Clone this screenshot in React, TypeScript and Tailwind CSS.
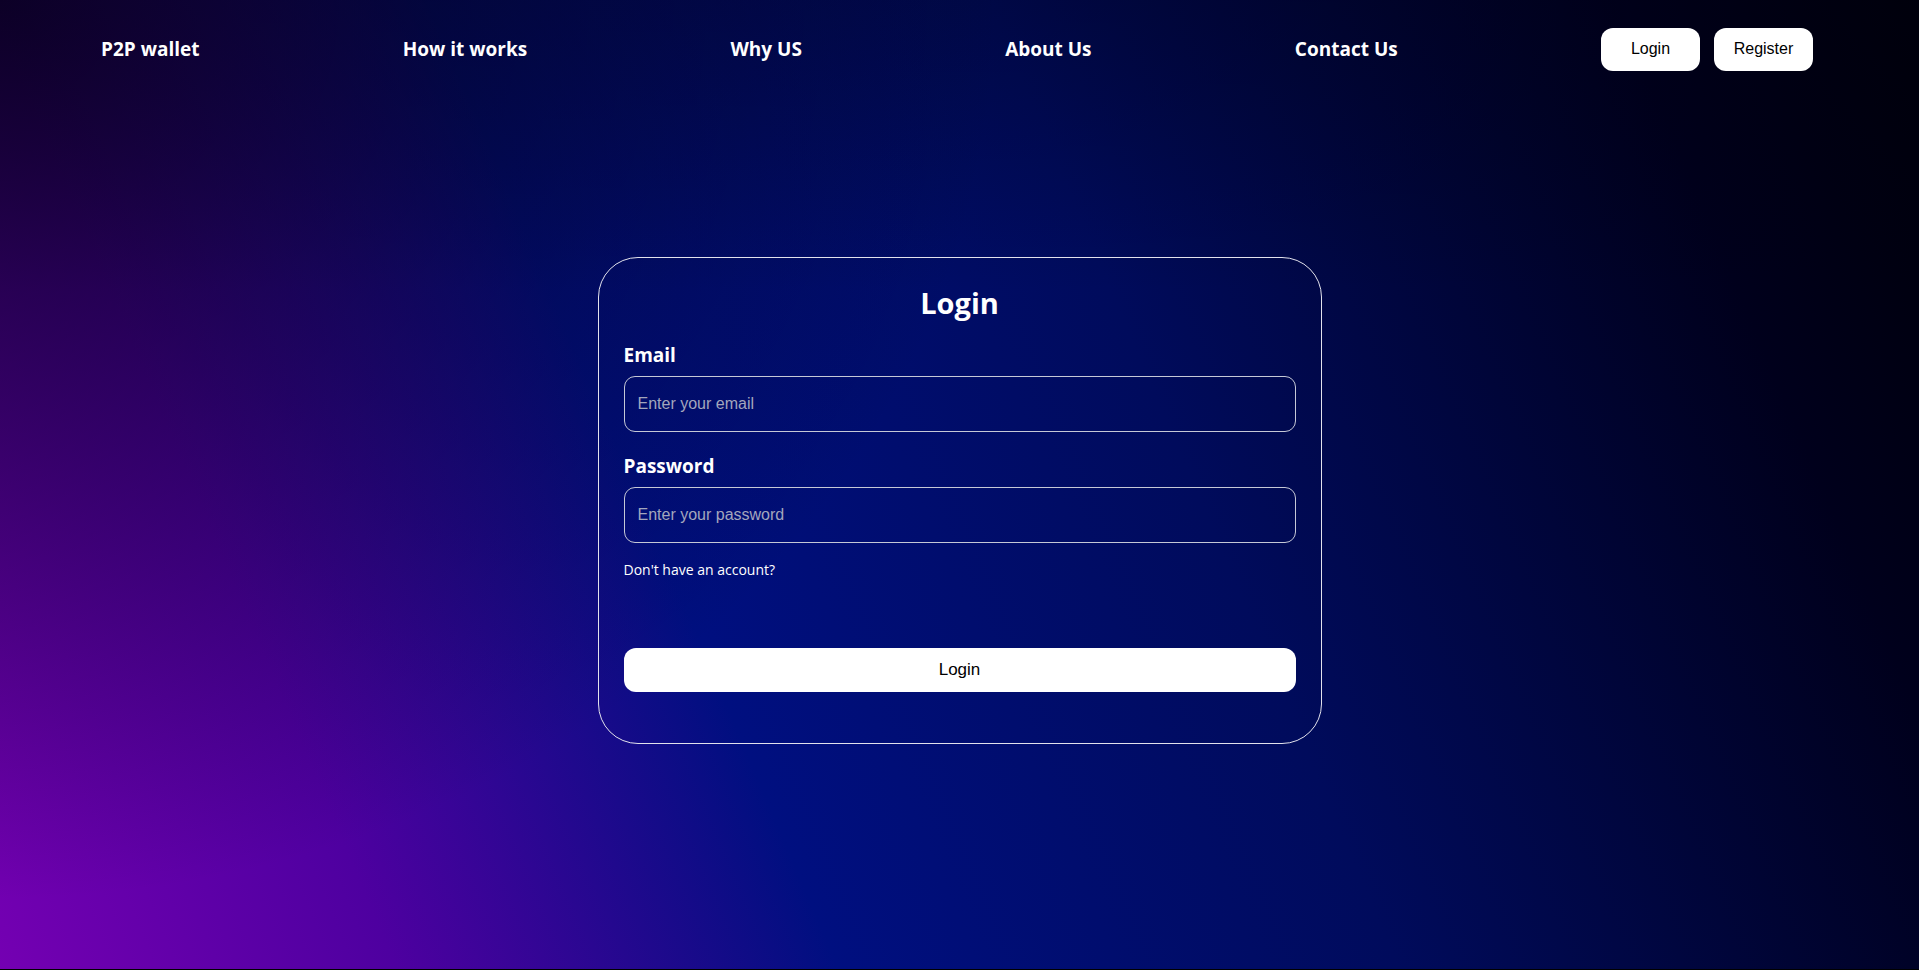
import React, { useState } from 'react';

const navLinks = ['P2P wallet', 'How it works', 'Why US', 'About Us', 'Contact Us'];

const App: React.FC = () => {
  const [email, setEmail] = useState('');
  const [password, setPassword] = useState('');

  const handleSubmit = (e: React.FormEvent) => {
    e.preventDefault();
  };

  return (
    <div className="h-[970px] overflow-hidden bg-black">
      <div className="h-[969px] font-['Open_Sans',sans-serif] bg-[radial-gradient(1000px_900px_at_0_0,rgba(5,0,25,0.85),rgba(5,0,25,0)),linear-gradient(to_bottom,rgba(0,0,20,0.3),rgba(0,0,20,0)_30%),linear-gradient(67deg,#7400b2_0%,#4e00a0_17%,#000f80_36%,#000b5c_60%,#00001c_87%,#000008_100%)]">
        <nav className="flex h-[98px] items-center justify-between pl-[101px] pr-[106px]">
          {navLinks.map((link) => (
            <a key={link} href="#" className="text-[19px] font-bold leading-7 text-white">
              {link}
            </a>
          ))}
          <div className="flex gap-[14px]">
            <button className="h-[43px] w-[99px] rounded-xl bg-white font-['Liberation_Sans',Arial,sans-serif] text-base text-black">
              Login
            </button>
            <button className="h-[43px] w-[99px] rounded-xl bg-white font-['Liberation_Sans',Arial,sans-serif] text-base text-black">
              Register
            </button>
          </div>
        </nav>

        <form
          onSubmit={handleSubmit}
          className="mx-auto mt-[159px] flex w-[724px] flex-col rounded-[40px] border border-[#e2e2ec] px-[25px] pt-[27px] pb-[51px]"
        >
          <h1 className="text-center text-[29px] font-bold leading-9 text-white">Login</h1>

          <label className="mt-5 text-[19px] font-bold leading-7 text-white">Email</label>
          <input
            type="email"
            value={email}
            onChange={(e) => setEmail(e.target.value)}
            placeholder="Enter your email"
            className="mt-[7px] h-14 rounded-[11px] border border-[#c5c8d6] bg-transparent pl-[13px] font-['Liberation_Sans',Arial,sans-serif] text-base text-white outline-none placeholder:text-[#a3a6bd]"
          />

          <label className="mt-5 text-[19px] font-bold leading-7 text-white">Password</label>
          <input
            type="password"
            value={password}
            onChange={(e) => setPassword(e.target.value)}
            placeholder="Enter your password"
            className="mt-[7px] h-14 rounded-[11px] border border-[#c5c8d6] bg-transparent pl-[13px] font-['Liberation_Sans',Arial,sans-serif] text-base text-white outline-none placeholder:text-[#a3a6bd]"
          />

          <p className="mt-[17px] text-sm leading-5 text-white">Don't have an account?</p>

          <button
            type="submit"
            className="mt-[68px] h-11 rounded-xl bg-white font-['Liberation_Sans',Arial,sans-serif] text-[17px] text-black"
          >
            Login
          </button>
        </form>
      </div>
    </div>
  );
};

export default App;
